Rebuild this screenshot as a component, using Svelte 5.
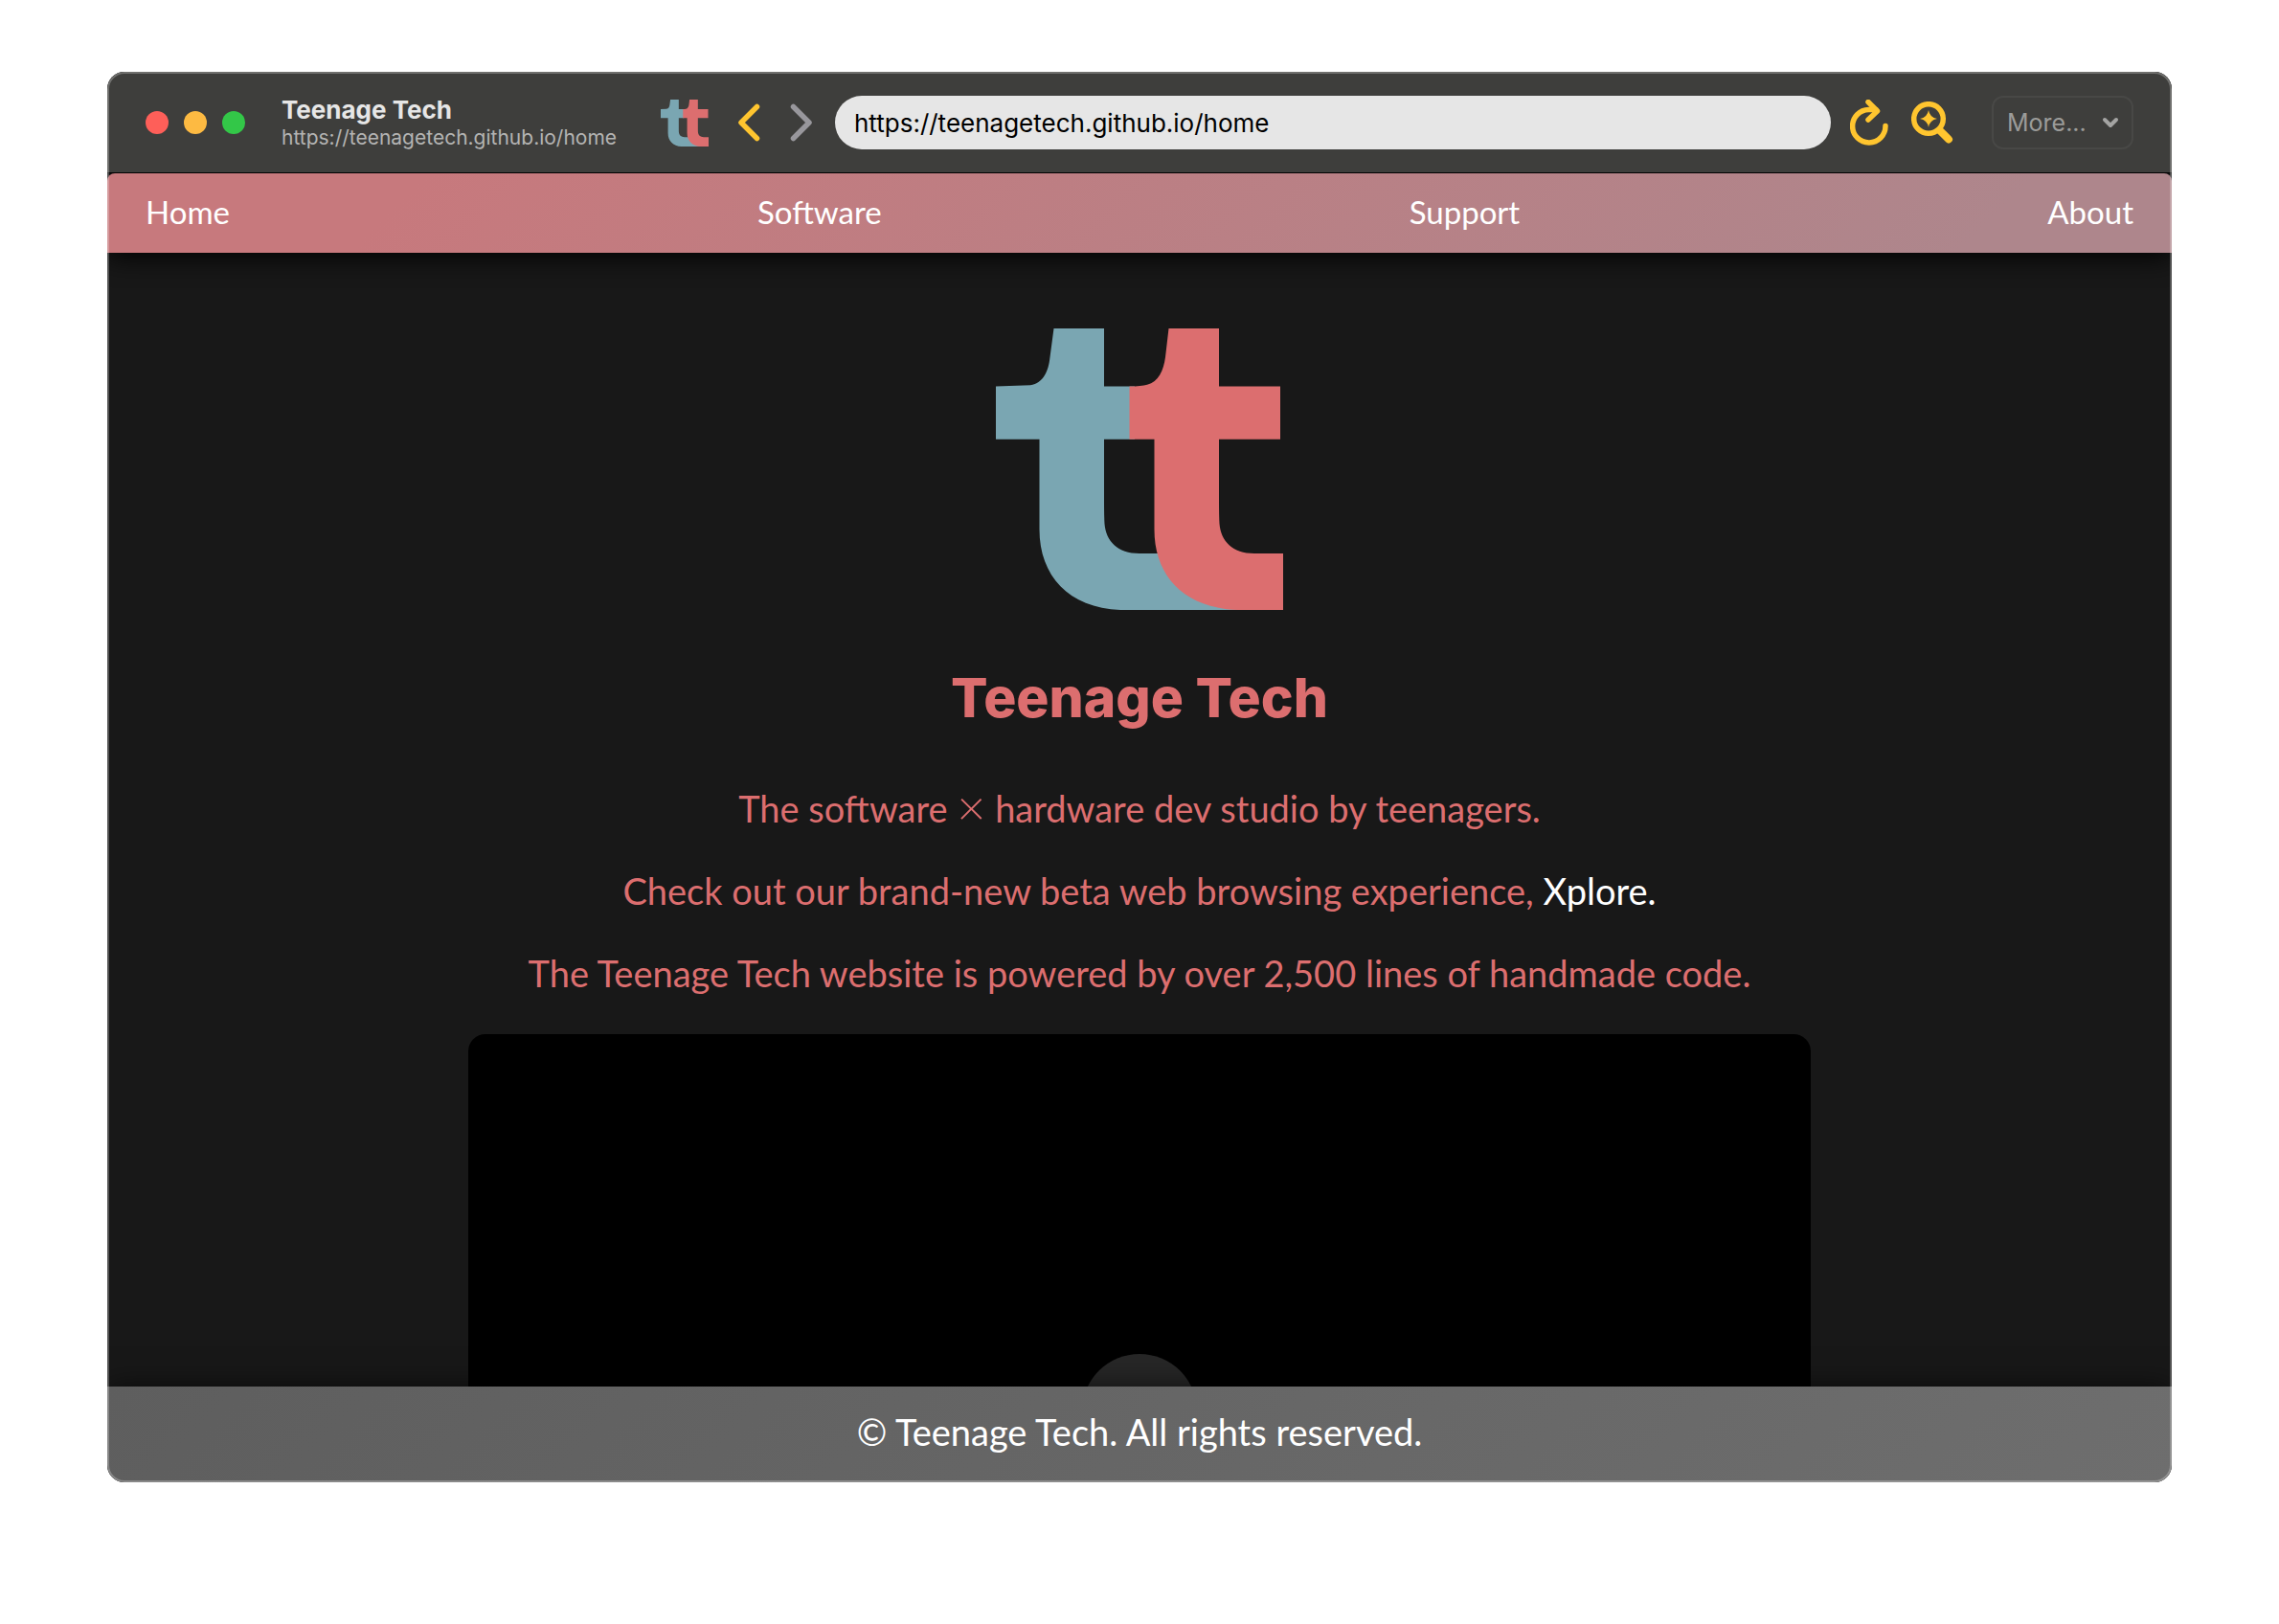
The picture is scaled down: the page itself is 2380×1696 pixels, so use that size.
<script>
  const links = ['Home', 'Software', 'Support', 'About'];
  let address = $state('https://teenagetech.github.io/home');
</script>

{#snippet logo(cls)}
  <svg class={cls} viewBox="0 0 300 294" role="img" aria-label="Teenage Tech logo">
    <path
      fill="#7aa6b2"
      d="M60.5 0H113V60.5H145V115.7H113V180Q113 196 113.5 204C115 222 127 235 150 235H190L260 294H130C76 292 45.5 258 45.5 210V115.7H0V60.5L36 59.2C50 57 55 44 56.5 30Z"
    />
    <path
      fill="#dc6e6f"
      d="M180.5 0H233V60.5H297V115.7H233V180Q233 196 233.5 204C235 222 247 235 270 235H300V294H253C196 292 165.5 258 165.5 210V115.7H139.5V60.5Q152 60.5 158 58.7C170 56 175 44 177 30Z"
    />
  </svg>
{/snippet}

<div class="desktop">
  <div class="window">
    <header class="titlebar">
      <div class="lights">
        <button class="light close" aria-label="Close"></button>
        <button class="light minimise" aria-label="Minimise"></button>
        <button class="light zoom" aria-label="Zoom"></button>
      </div>
      <div class="caption">
        <strong>Teenage Tech</strong>
        <span>https://teenagetech.github.io/home</span>
      </div>
      {@render logo('badge')}
      <button class="tool back" aria-label="Back">
        <svg width="24" height="40" viewBox="0 0 24 40"><path d="M20.500 3.500L4 20L20.500 36.500" /></svg>
      </button>
      <button class="tool forward" aria-label="Forward">
        <svg width="24" height="40" viewBox="0 0 24 40"><path d="M3.500 3.500L20 20L3.500 36.500" /></svg>
      </button>
      <input class="address" type="text" aria-label="Address" bind:value={address} />
      <button class="tool reload" aria-label="Reload">
        <svg width="40" height="48" viewBox="0 0 40 48">
          <path d="M37 27.500A17.200 17.200 0 1 1 19.500 10.500H27" />
          <path d="M19 2.500L28.500 12L19 21" />
        </svg>
      </button>
      <button class="tool find" aria-label="Search the page">
        <svg width="44" height="44" viewBox="0 0 44 44">
          <circle cx="18" cy="18" r="15.300" />
          <path class="handle" d="M30 30.500L39 39.500" />
          <path class="star" d="M18 9Q19.300 16.700 27 18Q19.300 19.300 18 27Q16.700 19.300 9 18Q16.700 16.700 18 9Z" />
        </svg>
      </button>
      <div class="more">
        <select aria-label="More">
          <option>More...</option>
        </select>
        <svg width="20" height="14" viewBox="0 0 20 14"><path d="M4 4L10 10L16 4" /></svg>
      </div>
    </header>

    <nav>
      {#each links as link}
        <a href="#{link.toLowerCase()}">{link}</a>
      {/each}
    </nav>

    <main>
      {@render logo('hero')}
      <h1>Teenage Tech</h1>
      <p>The software <span class="times">×</span> hardware dev studio by teenagers.</p>
      <p>Check out our brand-new beta web browsing experience, <a href="#xplore">Xplore.</a></p>
      <p>The Teenage Tech website is powered by over 2,500 lines of handmade code.</p>
      <div class="video">
        <button class="play" aria-label="Play video"></button>
      </div>
    </main>

    <footer>© Teenage Tech. All rights reserved.</footer>
  </div>
</div>

<style>
  :global(body) {
    margin: 0;
    background: #fff;
  }

  .desktop {
    box-sizing: border-box;
    height: 100vh;
    padding: 75px 112px 148px;
    font-family: Lato, 'Open Sans', sans-serif;
  }

  .window {
    position: relative;
    display: flex;
    flex-direction: column;
    height: 100%;
    border-radius: 18px;
    overflow: hidden;
    background: #181818;
  }

  .window::after {
    content: '';
    position: absolute;
    z-index: 3;
    inset: 0;
    border: 2px solid rgba(255, 255, 255, 0.26);
    border-radius: 18px;
    pointer-events: none;
  }

  button,
  input,
  select {
    margin: 0;
    padding: 0;
    border: 0;
    background: none;
    font: inherit;
  }

  svg {
    display: block;
    flex: none;
  }

  .titlebar {
    position: relative;
    z-index: 2;
    display: flex;
    align-items: center;
    flex: none;
    height: 105px;
    padding: 0 40px;
    background: #3e3e3c;
    border-bottom: 1px solid #000;
    font-family: Inter, Roboto, sans-serif;
  }

  .lights {
    display: flex;
    gap: 16px;
    margin-right: 38px;
  }

  .light {
    width: 24px;
    height: 24px;
    border-radius: 50%;
  }

  .close {
    background: #fe5f59;
  }

  .minimise {
    background: #fdba42;
  }

  .zoom {
    background: #33c748;
  }

  .caption {
    display: flex;
    flex-direction: column;
    width: 396px;
    padding-top: 3px;
    white-space: nowrap;
  }

  .caption strong {
    font-size: 26px;
    line-height: 30px;
    color: #e6e6e6;
  }

  .caption span {
    font-size: 21px;
    line-height: 28px;
    color: #b4b4b3;
  }

  .badge {
    width: 50px;
    height: 49px;
    margin: 2px 30px 0 0;
  }

  .tool path,
  .tool circle,
  .more path {
    fill: none;
    stroke: #ffc52f;
    stroke-width: 5.500;
    stroke-linecap: round;
    stroke-linejoin: round;
  }

  .back {
    margin-right: 31px;
  }

  .tool.forward path {
    stroke: #98979c;
  }

  .forward {
    margin-right: 23px;
  }

  .address {
    flex: 1;
    min-width: 0;
    box-sizing: border-box;
    height: 56px;
    padding: 2px 20px 0;
    border-radius: 28px;
    background: #e6e6e6;
    color: #000;
    font-size: 26px;
  }

  .reload {
    margin: 0 24px 0 20px;
  }

  .find {
    margin-right: 40px;
  }

  .tool path.handle {
    stroke-width: 8;
  }

  .tool path.star {
    fill: #ffc52f;
    stroke: none;
  }

  .more {
    display: flex;
    align-items: center;
    box-sizing: border-box;
    width: 148px;
    height: 56px;
    padding-right: 12px;
    border: 2px solid #484846;
    border-radius: 12px;
  }

  .more select {
    flex: 1;
    min-width: 0;
    height: 100%;
    padding-left: 14px;
    appearance: none;
    color: #9b9b99;
    font-size: 25px;
  }

  .more path {
    stroke: #a4a4a3;
    stroke-width: 4;
  }

  nav {
    position: relative;
    z-index: 1;
    display: flex;
    align-items: center;
    justify-content: space-between;
    flex: none;
    box-sizing: border-box;
    height: 83px;
    padding: 0 40px 4px;
    border-radius: 8px 8px 0 0;
    background: linear-gradient(135deg, #c7797d, #c7797d 15%, #ae868c 90%);
    box-shadow: 0 4px 28px #000;
  }

  nav a {
    color: #fff;
    font-size: 33px;
    line-height: 40px;
    text-decoration: none;
  }

  main {
    display: flex;
    flex-direction: column;
    align-items: center;
    flex: 1;
    min-height: 0;
    overflow: hidden;
    color: #dc6e6f;
    text-align: center;
  }

  .hero {
    width: 300px;
    height: 294px;
    margin-top: 79px;
  }

  h1 {
    margin: 56px 0 36px;
    font-family: Inter, Lato, sans-serif;
    font-size: 57px;
    font-weight: 800;
    line-height: 72px;
  }

  p {
    margin: 21px 0;
    font-size: 38px;
    line-height: 44px;
  }

  .times {
    font-size: 52px;
    font-weight: 300;
    line-height: 0;
    vertical-align: -3px;
  }

  main a {
    color: #fff;
    text-decoration: none;
  }

  .video {
    display: flex;
    align-items: center;
    justify-content: center;
    flex: none;
    width: 65%;
    aspect-ratio: 16 / 9;
    margin-top: 21px;
    border-radius: 18px;
    background: #000;
  }

  .play {
    width: 120px;
    height: 120px;
    border-radius: 50%;
    background: #272727;
  }

  footer {
    position: relative;
    z-index: 1;
    flex: none;
    box-sizing: border-box;
    padding: 25px 40px 31px;
    background: linear-gradient(135deg, #5e5e5e, #6e6e6e);
    box-shadow: 0 0 28px rgba(0, 0, 0, 0.6);
    color: #fff;
    font-size: 38px;
    line-height: 44px;
    text-align: center;
  }
</style>
